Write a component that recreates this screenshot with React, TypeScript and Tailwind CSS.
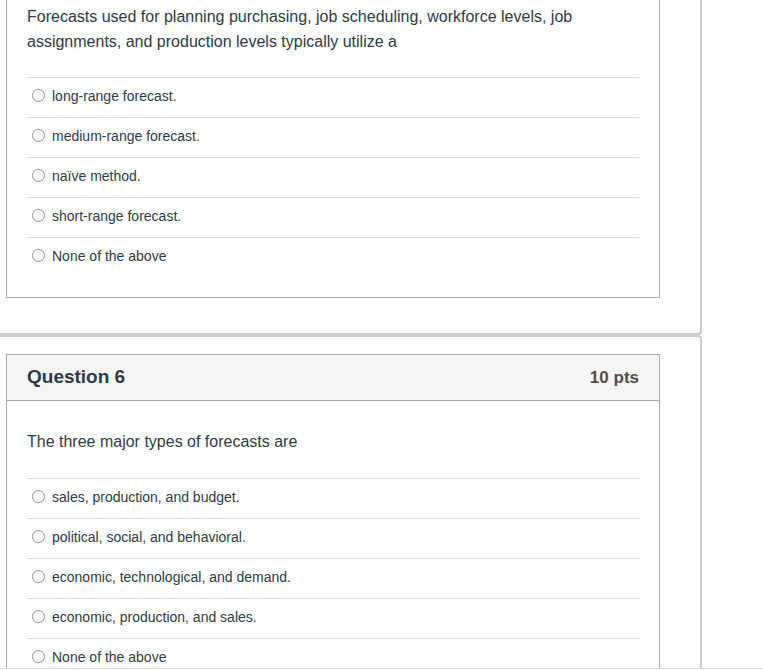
import React from "react";

const Radio = () => (
  <span className="inline-block w-[13px] h-[13px] rounded-full border border-[#8a8a8a] bg-white shrink-0" />
);

const Answer = ({ text }: { text: string }) => (
  <div className="h-[40px] border-t border-[#dddddd] flex items-center pl-[5px] pb-[4px] gap-[7px]">
    <Radio />
    <span className="text-[14px] text-[#2d3b45] leading-[20px]">{text}</span>
  </div>
);

export default function App() {
  const a1 = [
    "long-range forecast.",
    "medium-range forecast.",
    "naïve method.",
    "short-range forecast.",
    "None of the above",
  ];
  const a2 = [
    "sales, production, and budget.",
    "political, social, and behavioral.",
    "economic, technological, and demand.",
    "economic, production, and sales.",
    "None of the above",
  ];
  return (
    <div
      className="w-[763px] h-[670px] overflow-hidden bg-white"
      style={{ fontFamily: '"Liberation Sans", Arial, sans-serif' }}
    >
      <div className="h-[669px] overflow-hidden border-b border-[#dddddd]">
        {/* Section 1 */}
        <div className="w-[702px] h-[335px] border-r-2 border-b-2 border-[#cccccc] rounded-br-[4px]">
          <div className="ml-[6px] w-[654px] border border-t-0 border-[#a8a8a8] px-[20px] pb-[20px]">
            <div className="pt-[4px] pb-[23px] text-[16px] leading-[25px] text-[#2d3b45]">
              Forecasts used for planning purchasing, job scheduling, workforce levels, job
              assignments, and production levels typically utilize a
            </div>
            {a1.map((t) => (
              <Answer key={t} text={t} />
            ))}
          </div>
        </div>
        {/* Section 2 */}
        <div className="w-[702px] h-[400px] border-r-2 border-t-2 border-[#cccccc] rounded-tr-[4px] pt-[17px]">
          <div className="ml-[6px] w-[654px] border border-b-0 border-[#a8a8a8]">
            <div className="h-[46px] bg-[#f5f5f5] border-b border-[#a8a8a8] flex items-center justify-between px-[20px]">
              <span className="text-[19px] font-bold text-[#2d3b45]">Question 6</span>
              <span className="text-[17px] font-bold text-[#505050]">10 pts</span>
            </div>
            <div className="px-[20px]">
              <div className="pt-[28px] pb-[24px] text-[16px] leading-[25px] text-[#2d3b45]">
                The three major types of forecasts are
              </div>
              {a2.map((t) => (
                <Answer key={t} text={t} />
              ))}
            </div>
          </div>
        </div>
      </div>
    </div>
  );
}
